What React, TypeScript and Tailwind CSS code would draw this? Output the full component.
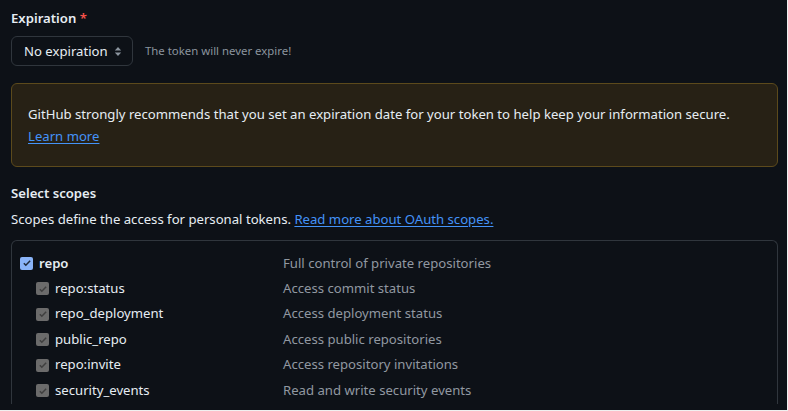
const scopes = [
  { name: "repo:status", desc: "Access commit status" },
  { name: "repo_deployment", desc: "Access deployment status" },
  { name: "public_repo", desc: "Access public repositories" },
  { name: "repo:invite", desc: "Access repository invitations" },
  { name: "security_events", desc: "Read and write security events" },
];

function Check({ disabled }: { disabled?: boolean }) {
  return (
    <span
      className={
        "flex h-[13px] w-[13px] shrink-0 items-center justify-center rounded-[2px] " +
        (disabled ? "bg-[#6b6b6b]" : "bg-[#8ab4f8]")
      }
    >
      <svg viewBox="0 0 12 12" className="h-[10px] w-[10px]">
        <path
          d="M2.2 6.3l2.4 2.4 5.2-5.4"
          fill="none"
          stroke={disabled ? "#3f3f3f" : "#1f2a3a"}
          strokeWidth="1.8"
        />
      </svg>
    </span>
  );
}

export default function App() {
  return (
    <div
      className="h-[411px] w-[788px] overflow-hidden border-b border-r border-[#f0f0f0] bg-[#0d1117] pl-[11px] pr-[9px] text-[13.15px] text-[#e6edf3]"
      style={{ fontFamily: '"Noto Sans", "Liberation Sans", sans-serif' }}
    >
      <div className="pt-[8px] font-semibold leading-[21px]">
        Expiration <span className="text-[#f85149]">*</span>
      </div>
      <div className="mt-[7px] flex items-center gap-[12px]">
        <div className="flex h-[30px] w-[122px] items-center justify-between rounded-[6px] border border-[#30363d] bg-[#0d1117] pl-[12px] pr-[10px]">
          <span className="leading-[20px]">No expiration</span>
          <svg viewBox="0 0 8 12" className="h-[11px] w-[8px]">
            <path d="M4 1L7.5 5H0.5z M4 11L0.5 7H7.5z" fill="#8b949e" />
          </svg>
        </div>
        <span className="text-[11.4px] text-[#8b949e]">The token will never expire!</span>
      </div>

      <div className="mt-[17px] rounded-[6px] border border-[#5c4a1c] bg-[#272115] px-[16px] py-[19px] leading-[22px]">
        <p>
          GitHub strongly recommends that you set an expiration date for your token to help keep your
          information secure.
        </p>
        <a className="text-[#4493f8] underline underline-offset-2">Learn more</a>
      </div>

      <div className="mt-[16px] font-semibold leading-[21px]">Select scopes</div>
      <p className="mt-[5px] leading-[21px]">
        Scopes define the access for personal tokens.{" "}
        <a className="text-[#4493f8] underline underline-offset-2">Read more about OAuth scopes.</a>
      </p>

      <div className="mt-[10px] rounded-t-[6px] border border-b-0 border-[#30363d] pt-[10px]">
        <div className="flex h-[25px] items-center">
          <div className="flex w-[271px] items-center gap-[6px] pl-[8px]">
            <Check />
            <span className="font-semibold">repo</span>
          </div>
          <span className="text-[#9198a1]">Full control of private repositories</span>
        </div>
        {scopes.map((s) => (
          <div key={s.name} className="flex h-[25.5px] items-center">
            <div className="flex w-[271px] items-center gap-[6px] pl-[24px]">
              <Check disabled />
              <span>{s.name}</span>
            </div>
            <span className="text-[#9198a1]">{s.desc}</span>
          </div>
        ))}
      </div>
    </div>
  );
}
